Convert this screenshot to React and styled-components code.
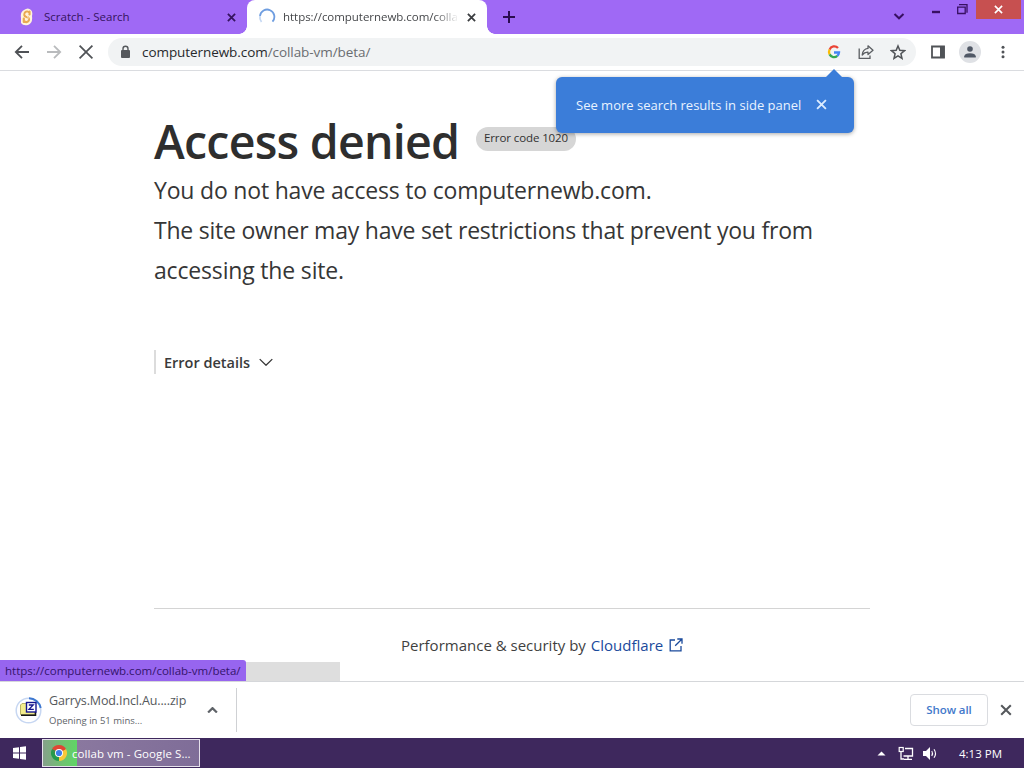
import styled, { createGlobalStyle } from 'styled-components';

const GlobalStyle = createGlobalStyle`
  * {
    box-sizing: border-box;
  }

  body {
    margin: 0;
    overflow: hidden;
    background: #fff;
    font-family: "Open Sans", "Noto Sans", sans-serif;
  }
`;

const Screen = styled.div`
  width: 1024px;
  height: 768px;
  display: flex;
  flex-direction: column;
  overflow: hidden;
`;

const Text = styled.span`
  font-size: ${(p) => p.$size}px;
  font-weight: ${(p) => p.$weight || 400};
  letter-spacing: ${(p) => p.$track || 0}px;
  color: ${(p) => p.$color || 'inherit'};
  white-space: nowrap;
`;

const TabStrip = styled.div`
  display: flex;
  height: 34px;
  flex: none;
  background: #9f69f5;
`;

const Tab = styled.div`
  display: flex;
  align-items: center;
  height: 34px;
  width: ${(p) => p.$width}px;
  padding: 0 11px 0 ${(p) => p.$left}px;
  color: #35135f;
`;

const ActiveTab = styled(Tab)`
  position: relative;
  background: #fff;
  border-radius: 8px 8px 0 0;
  color: #45474a;

  &::before,
  &::after {
    content: '';
    position: absolute;
    bottom: 0;
    width: 8px;
    height: 8px;
  }

  &::before {
    left: -8px;
    background: radial-gradient(circle at 0 0, transparent 7.5px, #fff 8px);
  }

  &::after {
    right: -8px;
    background: radial-gradient(circle at 100% 0, transparent 7.5px, #fff 8px);
  }
`;

const TabTitle = styled(Text)`
  flex: none;
  width: ${(p) => p.$width}px;
  margin-left: ${(p) => p.$gap}px;
  line-height: 18px;
  mask-image: ${(p) => (p.$fade ? 'linear-gradient(90deg, #000 86%, transparent)' : 'none')};
`;

const TabClose = styled.span`
  display: flex;
  margin-left: auto;
`;

const NewTab = styled.span`
  display: flex;
  align-items: center;
  margin-left: 15px;
`;

const WindowButtons = styled.div`
  display: flex;
  align-items: flex-start;
  margin-left: auto;
`;

const CloseWindow = styled.div`
  display: flex;
  align-items: center;
  justify-content: center;
  width: 45px;
  height: 19px;
  margin-right: 3px;
  background: #c75050;
`;

const Toolbar = styled.div`
  display: flex;
  align-items: center;
  flex: none;
  height: 37px;
  padding: 0 13px 0 14px;
  border-bottom: 1px solid #dadce0;
`;

const NavButtons = styled.div`
  display: flex;
  gap: 16px;
  width: 94px;
`;

const AddressBar = styled.div`
  display: flex;
  align-items: center;
  flex: none;
  width: 808px;
  height: 28px;
  padding: 0 10px 0 11px;
  border-radius: 14px;
  background: #f1f3f4;
`;

const Url = styled(Text)`
  margin-left: 11px;
  line-height: 20px;
`;

const BarActions = styled.div`
  display: flex;
  gap: 16px;
  margin-left: auto;
`;

const SideActions = styled.div`
  display: flex;
  align-items: center;
  gap: 14px;
  margin-left: 15px;
`;

const Avatar = styled.span`
  display: flex;
  align-items: center;
  justify-content: center;
  width: 22px;
  height: 22px;
  border-radius: 50%;
  background: #dfe1e5;
`;

const Page = styled.main`
  position: relative;
  flex: none;
  height: 610px;
  padding: 42px 154px 0;
`;

const TitleRow = styled.div`
  display: flex;
  align-items: flex-start;
  height: 57px;
`;

const Title = styled.h1`
  flex: none;
  width: 322px;
  margin: 0;
  font-size: 46.5px;
  line-height: 56px;
  font-weight: 600;
  letter-spacing: -0.75px;
  color: #2e2e2e;
  white-space: nowrap;
`;

const CodePill = styled.span`
  display: flex;
  align-items: center;
  justify-content: center;
  flex: none;
  width: 100px;
  height: 24px;
  margin-top: 14px;
  padding-bottom: 3px;
  border-radius: 12px;
  background: #d6d6d6;
`;

const Message = styled.p`
  margin: 0;
  font-size: 23px;
  line-height: 40px;
  letter-spacing: ${(p) => p.$track}px;
  color: #363636;
  white-space: nowrap;
`;

const Details = styled.div`
  display: flex;
  align-items: center;
  gap: 9px;
  height: 24px;
  margin-top: 60px;
  padding-left: 8px;
  border-left: 2px solid #dcdcdc;
`;

const Footer = styled.footer`
  display: flex;
  align-items: center;
  height: 73px;
  width: 716px;
  margin-top: 234px;
  padding-left: 247px;
  border-top: 1px solid #d4d4d4;
`;

const FooterLink = styled.a`
  display: flex;
  align-items: center;
  gap: 6px;
  margin-left: 5px;
  color: #1a4a9c;
`;

const Tooltip = styled.div`
  position: absolute;
  z-index: 2;
  top: 6px;
  left: 556px;
  display: flex;
  align-items: center;
  width: 298px;
  height: 56px;
  padding: 0 27px 1px 20px;
  border-radius: 6px;
  background: #3b7dd9;
  box-shadow: 0 1px 4px rgba(0, 0, 0, 0.35);
  justify-content: space-between;

  &::before {
    content: '';
    position: absolute;
    top: -8px;
    left: 269px;
    border: solid transparent;
    border-width: 0 9px 9px;
    border-bottom-color: #3b7dd9;
  }
`;

const StatusBubble = styled.div`
  position: absolute;
  left: 0;
  bottom: 0;
  width: 246px;
  height: 21px;
  padding-left: 5px;
  border-radius: 0 3px 0 0;
  background: #9765ef;
  line-height: 18px;
  z-index: 1;
`;

const ScrollHint = styled.div`
  position: absolute;
  left: 240px;
  bottom: 0;
  width: 100px;
  height: 19px;
  background: #dedede;
`;

const Downloads = styled.div`
  display: flex;
  align-items: center;
  flex: none;
  height: 57px;
  padding: 0 12px 0 15px;
  border-top: 1px solid #d5d7da;
`;

const DownloadItem = styled.div`
  display: flex;
  align-items: center;
  width: 222px;
  height: 44px;
  padding-right: 18px;
  border-right: 1px solid #cfd1d4;
`;

const FileInfo = styled.div`
  display: flex;
  flex-direction: column;
  gap: 1px;
  width: 140px;
  margin: 0 auto 0 7px;
`;

const FileLine = styled(Text)`
  line-height: 19px;
`;

const ShowAll = styled.button`
  width: 78px;
  height: 32px;
  margin: 0 12px 0 auto;
  padding: 0 0 3px;
  border: 1px solid #dadce0;
  border-radius: 4px;
  background: #fff;
  font-family: inherit;
`;

const Taskbar = styled.div`
  display: flex;
  align-items: center;
  flex: none;
  height: 30px;
  padding: 0 22px 0 13px;
  background: #3e285d;
  color: #fff;
`;

const TaskButton = styled.div`
  display: flex;
  align-items: center;
  gap: 5px;
  width: 158px;
  height: 28px;
  margin-left: 15px;
  padding-left: 8px;
  border: 1px solid #e6e1ec;
  background: linear-gradient(90deg, #85a08a 0, #6fc270 20px, #5fd566 34px, #8a789f 34px, #7f6d98 100%);
`;

const Tray = styled.div`
  display: flex;
  align-items: center;
  gap: 20px;
  margin-left: auto;
`;

const Cross = ({ size, color, width = 2 }) => (
  <svg width={size} height={size} viewBox="0 0 10 10" stroke={color} strokeWidth={width} fill="none">
    <path d="M1 1l8 8M9 1L1 9" />
  </svg>
);

const Chevron = ({ width, color, stroke = 2, up }) => (
  <svg width={width} height={width * 0.6} viewBox="0 0 10 6" fill="none" stroke={color} strokeWidth={stroke}>
    <path d={up ? 'M1 5l4-4 4 4' : 'M.5 .8l4.5 4.4L9.5 .8'} />
  </svg>
);

const ScratchIcon = () => (
  <svg width="16" height="18" viewBox="0 0 16 18">
    <path d="M5 2Q9-1 12 2Q14 4 13 8Q14 15 9 17Q4 18 2 15V10Q1 4 5 2z" fill="#fff3dc" />
    <path
      d="M10.5 6.5V3.5M10.3 5.2Q8.5 2.5 6 4.5Q4.3 8 7 8.7Q10.8 9.5 9.8 12.5Q8 15.5 4.8 12.8V10.5M4.8 14V12"
      fill="none"
      stroke="#e9aa52"
      strokeWidth="2.2"
      strokeLinecap="round"
    />
    <path d="M9.5 5.5Q8 4 6.8 5.5Q6.3 7.3 8.3 8.2Q10 9.4 8.5 12" fill="none" stroke="#fff3dc" strokeWidth=".8" />
  </svg>
);

const Spinner = () => (
  <svg width="18" height="18" viewBox="0 0 18 18" fill="none">
    <path d="M2 8A7.2 7.2 0 1 1 14.5 13.6" stroke="#6e9de0" strokeWidth="1.8" />
    <path d="M3.5 14A7.2 7.2 0 0 1 2 8" stroke="#c5d8f3" strokeWidth="1.8" />
  </svg>
);

const ArrowIcon = ({ forward }) => (
  <svg width="16" height="16" viewBox="0 0 16 16" fill="none" stroke={forward ? '#b9bbbd' : '#4f5256'} strokeWidth="1.8">
    <path d={forward ? 'M1 8h13M8 1.8L14.2 8 8 14.2' : 'M15 8H2M8 1.8L1.8 8 8 14.2'} />
  </svg>
);

const LockIcon = () => (
  <svg width="12" height="14" viewBox="0 0 12 14">
    <rect x="2" y="5" width="9" height="8" rx="1" fill="#55585c" />
    <path d="M4 5.5V3.7a2.5 2.5 0 0 1 5 0v1.8" fill="none" stroke="#55585c" strokeWidth="1.4" />
  </svg>
);

const GoogleIcon = () => (
  <svg width="16" height="16" viewBox="0 0 16 16" fill="none" strokeWidth="2.3">
    <path d="M12 4A5 5 0 0 0 3.6 5.6" stroke="#ea4335" />
    <path d="M3.6 5.6A5 5 0 0 0 3.6 10.4" stroke="#fbbc05" />
    <path d="M3.6 10.4A5 5 0 0 0 11.3 11.9" stroke="#34a853" />
    <path d="M11.3 11.9A5 5 0 0 0 13 8.5H8" stroke="#4285f4" />
  </svg>
);

const ShareIcon = () => (
  <svg width="16" height="16" viewBox="0 0 16 16" fill="none" stroke="#5b5e62" strokeWidth="1.3">
    <path d="M1.2 4.5V14.3H12V11.5" />
    <path d="M10 1.8L15 6.2 10 10.5V8.2Q6.5 8 4.2 11Q4.8 5 10 4.4z" strokeLinejoin="round" />
  </svg>
);

const StarIcon = () => (
  <svg width="16" height="16" viewBox="0 0 16 16" fill="none" stroke="#505357" strokeWidth="1.5">
    <path d="M8 2l1.8 4.3 4.7.4-3.6 3 1.1 4.6L8 11.8 4 14.3l1.1-4.6-3.6-3 4.7-.4z" />
  </svg>
);

const PanelIcon = () => (
  <svg width="14" height="14" viewBox="0 0 14 14">
    <path d="M1 1.5h12v11H1z" fill="none" stroke="#505357" strokeWidth="1.8" />
    <path d="M9 1h4.5v12H9z" fill="#505357" />
  </svg>
);

const PersonIcon = () => (
  <svg width="14" height="14" viewBox="0 0 14 14" fill="#505866">
    <circle cx="7" cy="4" r="2.8" />
    <path d="M1.2 12.5v-1.3Q1.8 8.3 7 8.3t5.8 2.9v1.3z" />
  </svg>
);

const DotsIcon = () => (
  <svg width="16" height="16" viewBox="0 0 16 16" fill="#505357">
    <circle cx="8" cy="3.2" r="1.5" />
    <circle cx="8" cy="8" r="1.5" />
    <circle cx="8" cy="12.8" r="1.5" />
  </svg>
);

const WindowIcons = () => (
  <svg width="84" height="34" viewBox="0 0 84 34" fill="none" stroke="#381062">
    <path d="M2.5 14l4.5 4.3 4.5-4.3" strokeWidth="2" />
    <path d="M40 12h8" strokeWidth="2.4" />
    <path d="M65 7.2h8.2v6.3h-7.5V7" strokeWidth="1.3" />
    <path d="M67 4.7h8v8" strokeWidth="1.3" />
  </svg>
);

const ExternalIcon = () => (
  <svg width="14" height="14" viewBox="0 0 14 14" fill="none" stroke="#1a4a9c" strokeWidth="1.3">
    <path d="M6 2H1.2v10.8H12V8M8.3 1H13v4.7M13 1L6.2 7.8" />
  </svg>
);

const ZipIcon = () => (
  <svg width="27" height="27" viewBox="0 0 27 27" fill="none">
    <circle cx="13.5" cy="13.5" r="12.3" stroke="#c7d7f2" strokeWidth="1.5" />
    <path d="M14 1.2A12.3 12.3 0 0 1 25.7 11" stroke="#3e78d0" strokeWidth="2" />
    <path d="M5.5 8l1.5-1.5h5l1 1.5h7V17.5h-14.5z" fill="#f3ed8c" stroke="#b9b268" />
    <path d="M6 18.3h14.5V15" stroke="#171717" strokeWidth="1.5" />
    <rect x="11.5" y="5.5" width="9.5" height="9.5" fill="#fff" stroke="#15158e" strokeWidth="1.4" />
    <path d="M13.8 8h4.4L14 12.3h4.8" stroke="#15158e" strokeWidth="1.3" />
  </svg>
);

const WindowsIcon = () => (
  <svg width="14" height="14" viewBox="0 0 14 14" fill="#fff">
    <path d="M0 2l6-.8v5.3H0zM7 1l6-.8v6.3H7zM0 7.4h6v5.3L0 12zM7 7.4h6v6.4l-6-.8z" />
  </svg>
);

const ChromeIcon = () => (
  <svg width="16" height="16" viewBox="0 0 16 16">
    <path d="M8 8L1.07 4A8 8 0 0 1 14.93 4z" fill="#df4634" />
    <path d="M8 8L14.93 4A8 8 0 0 1 8 16z" fill="#f8c83a" />
    <path d="M8 8V16A8 8 0 0 1 1.07 4z" fill="#249b4c" />
    <path d="M8 4h6.93L8 8zM4.5 10L1.07 4 8 8z" fill="#df4634" />
    <path d="M1.07 4L4.5 10 8 8z" fill="#249b4c" />
    <path d="M11.5 10L8 16V8z" fill="#f8c83a" />
    <circle cx="8" cy="8" r="4" fill="#fff" />
    <circle cx="8" cy="8" r="3.1" fill="#3d7ee8" />
  </svg>
);

const TrayIcons = () => (
  <svg width="62" height="18" viewBox="0 0 62 18" fill="none" stroke="#fff">
    <path d="M.5 11.5L4.5 7.5l4 4z" fill="#fff" stroke="none" />
    <path d="M28 4.5h7.5v7.5H26.5" strokeWidth="1.3" />
    <path d="M31 12v3M27 15.3h8M24 8v7h3" strokeWidth="1.3" />
    <rect x="22.2" y="3.5" width="4" height="4" strokeWidth="1.2" />
    <path d="M46 7h3l4-4v13l-4-4h-3z" fill="#fff" stroke="none" />
    <path d="M54.8 7q1.5 2.5 0 5M57 5.2q3 4.3 0 8.6" strokeWidth="1.1" />
  </svg>
);

const App = () => (
  <>
    <GlobalStyle />
    <Screen>
      <TabStrip>
        <Tab $width={247} $left={19}>
          <ScratchIcon />
          <TabTitle $size={11.5} $width={130} $gap={9}>Scratch - Search</TabTitle>
          <TabClose><Cross size={9} color="#35135f" /></TabClose>
        </Tab>
        <ActiveTab $width={240} $left={11}>
          <Spinner />
          <TabTitle $size={11.5} $width={176} $gap={7} $track={-0.04} $fade>https://computernewb.com/colla</TabTitle>
          <TabClose><Cross size={9} color="#3b3d40" /></TabClose>
        </ActiveTab>
        <NewTab>
          <svg width="14" height="14" viewBox="0 0 14 14" stroke="#2b0d50" strokeWidth="2">
            <path d="M7 1v12M1 7h12" />
          </svg>
        </NewTab>
        <WindowButtons>
          <WindowIcons />
          <CloseWindow><Cross size={9} color="#fff" width={1.8} /></CloseWindow>
        </WindowButtons>
      </TabStrip>

      <Toolbar>
        <NavButtons>
          <ArrowIcon />
          <ArrowIcon forward />
          <Cross size={16} color="#505357" width={1.1} />
        </NavButtons>
        <AddressBar>
          <LockIcon />
          <Url $size={13.5} $track={-0.07} $color="#27292c">
            computernewb.com<Text $size={13.5} $track={-0.07} $color="#6a6d71">/collab-vm/beta/</Text>
          </Url>
          <BarActions>
            <GoogleIcon />
            <ShareIcon />
            <StarIcon />
          </BarActions>
        </AddressBar>
        <SideActions>
          <PanelIcon />
          <Avatar><PersonIcon /></Avatar>
          <DotsIcon />
        </SideActions>
      </Toolbar>

      <Page>
        <Tooltip>
          <Text $size={13} $color="#e9f3ff">See more search results in side panel</Text>
          <Cross size={11} color="#dcecff" width={1.7} />
        </Tooltip>
        <TitleRow>
          <Title>Access denied</Title>
          <CodePill><Text $size={11.5} $track={-0.1} $color="#313131">Error code 1020</Text></CodePill>
        </TitleRow>
        <Message $track={-0.19}>You do not have access to computernewb.com.</Message>
        <Message $track={-0.23}>The site owner may have set restrictions that prevent you from</Message>
        <Message $track={-0.17}>accessing the site.</Message>
        <Details>
          <Text $size={14.5} $weight={600} $color="#3a3a3a">Error details</Text>
          <Chevron width={14} color="#333" stroke={0.9} />
        </Details>
        <Footer>
          <Text $size={15} $color="#3f3f3f">Performance &amp; security by</Text>
          <FooterLink>
            <Text $size={15}>Cloudflare</Text>
            <ExternalIcon />
          </FooterLink>
        </Footer>
        <ScrollHint />
        <StatusBubble>
          <Text $size={11.5} $color="#34146b">https://computernewb.com/collab-vm/beta/</Text>
        </StatusBubble>
      </Page>

      <Downloads>
        <DownloadItem>
          <ZipIcon />
          <FileInfo>
            <FileLine $size={12.5} $track={-0.13} $color="#55585c">Garrys.Mod.Incl.Au....zip</FileLine>
            <FileLine $size={9.5} $color="#606368">Opening in 51 mins...</FileLine>
          </FileInfo>
          <Chevron width={11} color="#5f6368" up />
        </DownloadItem>
        <ShowAll><Text $size={11.5} $weight={600} $track={-0.1} $color="#4379cb">Show all</Text></ShowAll>
        <Cross size={12} color="#55585c" width={1.7} />
      </Downloads>

      <Taskbar>
        <WindowsIcon />
        <TaskButton>
          <ChromeIcon />
          <Text $size={11.5} $track={0.08}>collab vm - Google S...</Text>
        </TaskButton>
        <Tray>
          <TrayIcons />
          <Text $size={11.5}>4:13 PM</Text>
        </Tray>
      </Taskbar>
    </Screen>
  </>
);

export default App;
